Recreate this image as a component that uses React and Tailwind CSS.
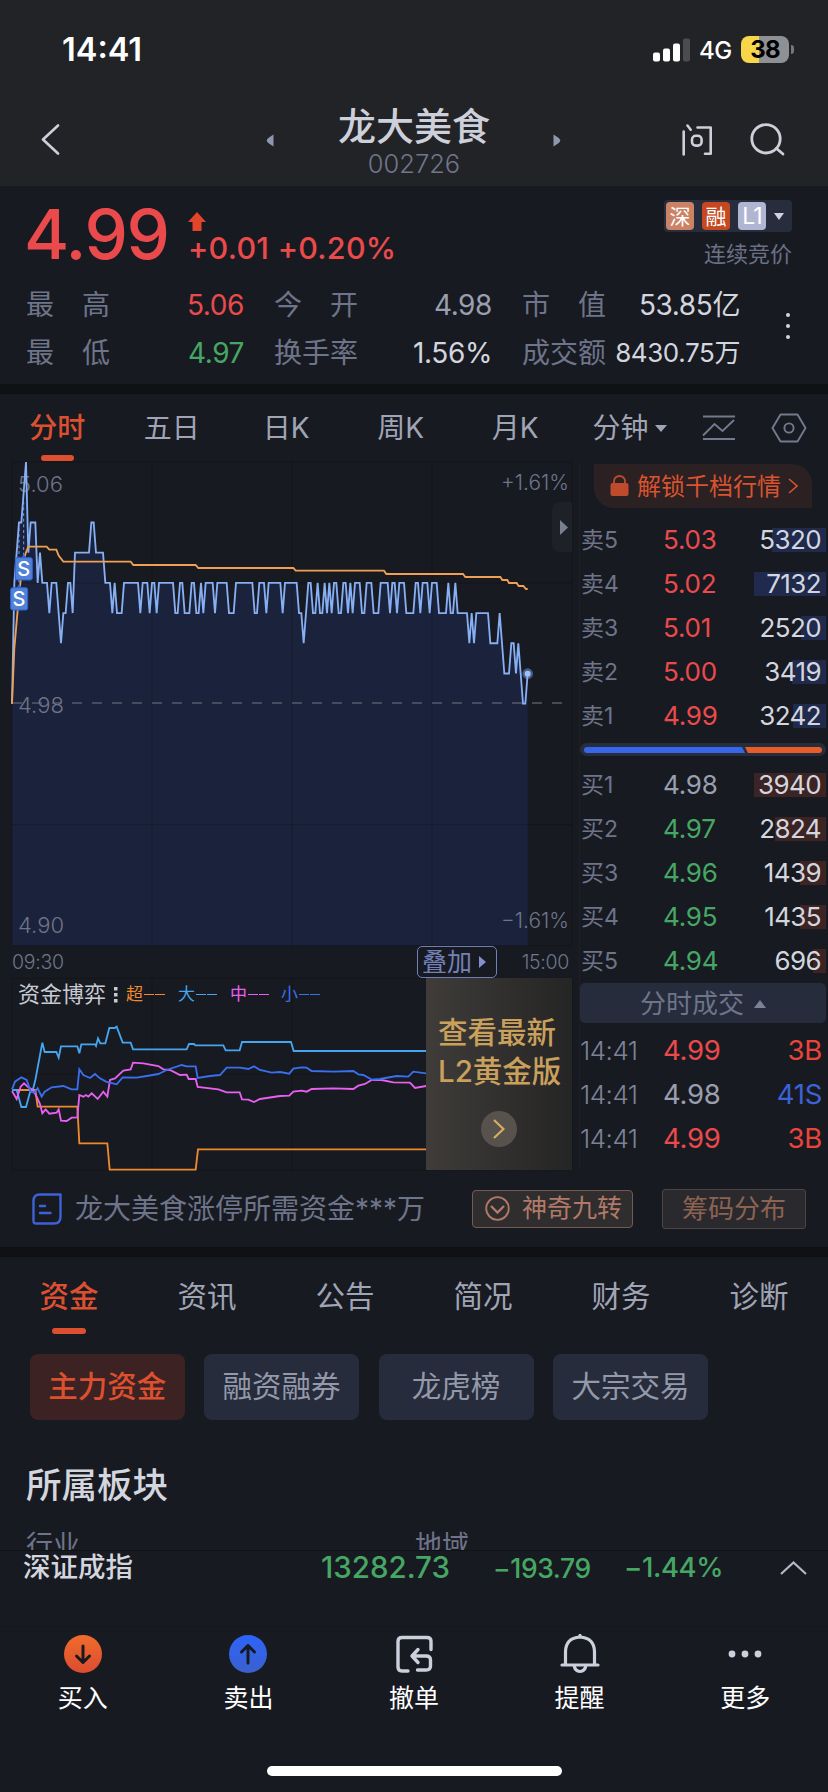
import { useId } from 'react';

// [cents above previous close, minutes it lasted]
const priceRuns = [
  [0, 1], [4, 1], [5, 1], [6, 2], [7, 1], [8, 1], [5, 1], [6, 3], [4, 1], [5, 1], [4, 3], [3, 1], [4, 3], [3, 1], [2, 1],
  [3, 2], [4, 2], [3, 1], [5, 7], [6, 2], [5, 4], [4, 3], [3, 1], [4, 1], [3, 3], [4, 7], [3, 1], [4, 3], [3, 1], [4, 2],
  [3, 1], [4, 7], [3, 2], [4, 2], [3, 3], [4, 2], [3, 2], [4, 1], [3, 1], [4, 4], [3, 1], [4, 5], [3, 3], [4, 8], [3, 2],
  [4, 3], [3, 1], [4, 6], [3, 1], [4, 6], [3, 2], [2, 1], [3, 1], [4, 2], [3, 2], [4, 1], [3, 2], [4, 1], [3, 1],
  [4, 1], [3, 1], [4, 2], [3, 2], [4, 2], [3, 1], [4, 1], [3, 1], [4, 3], [3, 2], [4, 3], [3, 3], [4, 4], [3, 1], [4, 2],
  [3, 1], [4, 3], [3, 4], [4, 2], [3, 1], [4, 3], [3, 1], [4, 3], [3, 4], [4, 1], [3, 2], [4, 1], [3, 5], [2, 1], [3, 1],
  [2, 1], [3, 6], [2, 4], [3, 1], [2, 1], [1, 3], [2, 2], [1, 1], [2, 1], [1, 1], [0, 2], [1, 1],
];

const prices = priceRuns.flatMap(([value, count]) => Array(count).fill(value));
const pricePoints = prices.map((p, i) => `${36 + i * 7},${926 - p * 90.6}`).join(' ');
const lastX = 36 + (prices.length - 1) * 7;

const averagePoints =
  '36,926 43,760 50,680 57,600 64,540 71,495 78,472 85,455 140,455 148,464 169,464 176,482 190,500 392,500 400,510 587,510 595,519 880,519 887,527 1152,527 1159,537 1389,537 1396,546 1501,546 1507,555 1522,555 1527,564 1550,564 1556,573 1570,573 1578,582 1583,582';

const fundLines = [
  {
    color: '#ee8a2e',
    points: '36,570 106,570 113,620 232,620 238,730 322,730 329,809 587,809 594,748 1278,748',
  },
  {
    color: '#45a5ee',
    points:
      '36,570 50,570 64,621 78,621 92,570 99,568 106,540 127,428 134,456 169,456 176,473 183,439 232,439 238,460 244,433 285,433 288,438 294,415 301,430 316,430 328,384 344,384 350,380 368,428 392,428 399,448 560,448 567,432 582,432 586,436 670,436 677,451 719,451 726,426 873,426 881,453 1278,453',
  },
  {
    color: '#e860f0',
    points:
      '36,573 50,597 62,560 72,550 85,562 99,570 110,590 120,612 127,640 137,628 148,641 170,638 176,628 183,662 200,663 215,653 232,652 238,585 250,590 258,585 265,590 275,580 293,597 310,575 322,590 330,540 345,535 370,512 392,508 399,488 430,490 475,498 490,508 510,510 540,525 560,524 566,537 587,537 593,561 655,568 680,577 719,577 726,598 745,599 762,606 780,597 840,588 868,587 880,575 905,572 920,575 935,567 1000,565 1060,567 1075,557 1095,552 1115,540 1145,540 1180,547 1230,548 1245,564 1278,558',
  },
  {
    color: '#3a6ff0',
    points:
      '36,568 45,545 64,532 80,540 92,575 103,578 113,565 125,590 134,575 155,562 190,558 215,568 232,568 238,508 250,525 270,534 285,522 300,535 318,545 350,553 368,532 410,533 440,528 475,522 500,510 545,495 560,499 587,499 593,534 630,528 660,525 680,503 720,503 745,507 762,499 780,510 815,518 840,516 868,521 880,506 905,502 920,503 935,513 1000,515 1060,513 1075,523 1090,525 1115,539 1140,537 1190,528 1225,530 1240,515 1278,520',
  },
];

const sells = [
  { label: '卖5', price: '5.03', volume: '5320', bar: 54 },
  { label: '卖4', price: '5.02', volume: '7132', bar: 72 },
  { label: '卖3', price: '5.01', volume: '2520', bar: 25 },
  { label: '卖2', price: '5.00', volume: '3419', bar: 34 },
  { label: '卖1', price: '4.99', volume: '3242', bar: 33 },
];

const buys = [
  { label: '买1', price: '4.98', volume: '3940', bar: 72, color: 'text-[#9a9fb0]' },
  { label: '买2', price: '4.97', volume: '2824', bar: 51, color: 'text-[#46a765]' },
  { label: '买3', price: '4.96', volume: '1439', bar: 26, color: 'text-[#46a765]' },
  { label: '买4', price: '4.95', volume: '1435', bar: 26, color: 'text-[#46a765]' },
  { label: '买5', price: '4.94', volume: '696', bar: 13, color: 'text-[#46a765]' },
];

const trades = [
  { price: '4.99', amount: '3B', color: 'text-[#eb4a4c]', amountColor: 'text-[#ea4538]' },
  { price: '4.98', amount: '41S', color: 'text-[#9a9fb0]', amountColor: 'text-[#3c62d8]' },
  { price: '4.99', amount: '3B', color: 'text-[#eb4a4c]', amountColor: 'text-[#ea4538]' },
];

const StatusBar = () => (
  <div className="flex h-[98px] items-center justify-between pt-[1px] pl-[62px] pr-[34px] text-white">
    <span className="mt-[2px] text-[32.5px] font-semibold leading-none">14:41</span>
    <div className="flex items-center">
      <svg width="38" height="24" viewBox="0 0 38 24" fill="#fff">
        <rect x="0" y="14.5" width="7" height="9" rx="2" />
        <rect x="10" y="10.5" width="7" height="13" rx="2" />
        <rect x="20" y="5.5" width="7" height="18" rx="2" />
        <rect x="30" y="0.5" width="7" height="23" rx="2" fill="#4b4c50" />
      </svg>
      <span className="ml-2 mt-[2px] w-[33px] text-[24px] font-medium leading-none tracking-[-0.5px]">4G</span>
      <div className="ml-[9px] flex h-[27px] w-[48px] items-center justify-center rounded-[8px] bg-[linear-gradient(to_right,#f8d64a_38%,#8f9094_38%)] text-[24px] font-bold leading-none tracking-[-0.8px] text-black">
        38
      </div>
      <div className="ml-[2px] h-[9px] w-[3px] rounded-r-full bg-[#77787c]" />
    </div>
  </div>
);

const Header = () => (
  <div className="flex h-[88px] items-center pl-[41px] pr-[41px] text-[#cdd0da]">
    <svg width="19" height="31" viewBox="0 0 19 31" fill="none" stroke="currentColor" strokeWidth="2.6" strokeLinecap="round" strokeLinejoin="round" className="mt-[-5px]">
      <path d="M17 1.5 L2 15.5 L17 29.5" />
    </svg>
    <svg width="8" height="13" viewBox="0 0 8 13" className="ml-[206px] mt-[-4px]">
      <path d="M7.5 0.5 V12.5 L3 9.5 Q-1.5 6.5 3 3.5 Z" fill="#8f97ae" />
    </svg>
    <div className="ml-[64px] mt-[-3px] flex w-[152px] flex-col items-center">
      <div className="whitespace-nowrap text-[38px] font-medium leading-[44px]">龙大美食</div>
      <div className="mt-[3px] text-[25.5px] font-light leading-[26px] text-[#70768c]">002726</div>
    </div>
    <svg width="8" height="13" viewBox="0 0 8 13" className="ml-[63px] mt-[-4px]">
      <path d="M0.5 0.5 V12.5 L5 9.5 Q9.5 6.5 5 3.5 Z" fill="#8f97ae" />
    </svg>
    <svg width="32" height="33" viewBox="0 0 32 33" fill="none" stroke="currentColor" strokeWidth="2.6" strokeLinecap="round" strokeLinejoin="round" className="ml-[121px] mt-[-4px]">
      <path d="M1.7 7.5 V30.5 M5.5 1.5 L8.7 5.7 M15.5 3.5 H28.7 V29.7 H23" />
      <rect x="10" y="11.8" width="9.6" height="9.8" rx="3.8" />
    </svg>
    <svg width="37" height="34" viewBox="0 0 37 34" fill="none" stroke="currentColor" strokeWidth="2.8" strokeLinecap="round" className="ml-[36px] mt-[-4px]">
      <circle cx="16" cy="15.8" r="14.2" />
      <path d="M26.5 25.5 L33 31" />
    </svg>
  </div>
);

const Stat = ({ label, value, color, size = 'text-[28px]' }) => (
  <div className="flex w-[218px] items-center justify-between whitespace-nowrap">
    <span className="flex w-[84px] justify-between text-[28px] text-[#6e7489]">
      {label.split('').map((c) => (
        <span key={c}>{c}</span>
      ))}
    </span>
    <span className={`tracking-[-0.4px] ${size} ${color}`}>{value}</span>
  </div>
);

const Quote = () => (
  <div className="h-[198px] pt-[14px]">
    <div className="flex h-[85px] pl-[24px] pr-[36px]">
      <div className="w-[164px] text-[69px] font-medium leading-[68px] tracking-[-1.4px] text-[#eb4a4c]">4.99</div>
      <div className="pt-[12px]">
        <svg width="18" height="20" viewBox="0 0 18 20">
          <path d="M9 0 L18 10 H13.5 V19 H4.5 V10 H0 Z" fill="#e2452a" />
        </svg>
        <div className="whitespace-nowrap text-[30.5px] font-medium leading-[32px] tracking-[0.25px] text-[#eb4a4c]">+0.01 +0.20%</div>
      </div>
      <div className="ml-auto flex flex-col items-end">
        <div className="flex h-8 items-center gap-2 rounded-[4px] bg-[#272d3d] px-[2px] text-[21px] leading-none text-white">
          <span className="flex size-7 items-center justify-center rounded-[4px] bg-[#cc8264]">深</span>
          <span className="flex size-7 items-center justify-center rounded-[4px] bg-[#c54820]">融</span>
          <span className="flex size-7 items-center justify-center rounded-[4px] bg-[#b0b6d2] text-[23px] tracking-[-1px]">L1</span>
          <svg width="10" height="7" viewBox="0 0 10 7" className="mr-[6px]">
            <path d="M0 0 H10 L5 7 Z" fill="#d0d3dc" />
          </svg>
        </div>
        <div className="mt-[10px] text-[22px] leading-6 text-[#6b7185]">连续竞价</div>
      </div>
    </div>
    <div className="flex">
      <div className="flex flex-col gap-[8px] pl-[26px]">
        <div className="flex h-10 items-center gap-[30px]">
          <Stat label="最高" value="5.06" color="text-[#eb4a4c]" />
          <Stat label="今开" value="4.98" color="text-[#9a9fb0]" />
          <Stat label="市值" value="53.85亿" color="text-[#d3d6de]" />
        </div>
        <div className="flex h-10 items-center gap-[30px]">
          <Stat label="最低" value="4.97" color="text-[#46a765]" />
          <Stat label="换手率" value="1.56%" color="text-[#d3d6de]" />
          <Stat label="成交额" value="8430.75万" color="text-[#d3d6de]" size="text-[26px]" />
        </div>
      </div>
      <div className="ml-[46px] mt-[28px] flex flex-col gap-[7px]">
        <i className="size-1 rounded-full bg-[#d3d6de]" />
        <i className="size-1 rounded-full bg-[#d3d6de]" />
        <i className="size-1 rounded-full bg-[#d3d6de]" />
      </div>
    </div>
  </div>
);

const PeriodTabs = () => (
  <div className="flex h-[68px] items-center text-[28px] text-[#a0a5b5]">
    <div className="relative w-[114.5px] text-center font-medium text-[#dc5030]">
      分时
      <div className="absolute left-[41px] top-[41px] z-10 h-[6px] w-[33px] rounded-full bg-[#dc5030]" />
    </div>
    {['五日', '日K', '周K', '月K'].map((t) => (
      <div key={t} className="w-[114.5px] text-center">{t}</div>
    ))}
    <div className="ml-[20px] flex items-center gap-[6px]">
      分钟
      <svg width="12" height="7" viewBox="0 0 12 7">
        <path d="M0 0 H12 L6 7 Z" fill="#a0a5b5" />
      </svg>
    </div>
    <svg width="34" height="26" viewBox="0 0 34 26" fill="none" stroke="#747a8e" strokeWidth="1.9" className="ml-[35px]">
      <path d="M1 1.5 H33 M1 24 H33 M1 20.5 L12.5 9 L20.5 16 L32 5" />
    </svg>
    <svg width="36" height="30" viewBox="0 0 36 30" fill="none" stroke="#747a8e" strokeWidth="1.9" strokeLinejoin="round" className="ml-[35px]">
      <path d="M9.5 1.5 H26.5 L34.5 15 L26.5 28.5 H9.5 L1.5 15 Z" />
      <circle cx="18" cy="15" r="4.6" />
    </svg>
  </div>
);

const SellMark = ({ x, y }) => (
  <g>
    <path d={`M${x - 8} ${y} L${x} ${y - 10} L${x + 8} ${y} Z`} fill="#2f62d6" />
    <rect x={x - 25} y={y} width="51" height="67" rx="6" fill="#4f82d8" stroke="#2f62d6" strokeWidth="3" />
    <text x={x} y={y + 55} textAnchor="middle" fontSize="60" fontWeight="500" fill="#fff">S</text>
  </g>
);

const PriceChart = () => (
  <div className="relative h-[484px] w-[560px] text-[#6e7489]">
    <svg width="560" height="484" viewBox="36 201 1680 1452" className="block overflow-visible">
      <polygon points={`36,1652 ${pricePoints} ${lastX},1652`} fill="#1a233b" />
      <path d="M36 201 H1716 V1652 H36 Z M456 201 V1652 M876 201 V1652 M1296 201 V1652 M36 564 H1716 M36 1289 H1716" fill="none" stroke="#000" strokeOpacity="0.2" strokeWidth="3" />
      <path d="M36 924 H1700" stroke="#575a6a" strokeWidth="5" strokeDasharray="30 30" />
      <path d="M71 320 V480 M57 400 V570" stroke="#6f9ce8" strokeWidth="3" strokeDasharray="9 8" />
    </svg>
    <span className="absolute left-[6px] top-[9px] text-[22px] font-light leading-[26px]">5.06</span>
    <span className="absolute left-[6px] top-[230px] text-[22px] font-light leading-[26px]">4.98</span>
    <span className="absolute left-[6px] top-[450px] text-[22px] font-light leading-[26px]">4.90</span>
    <span className="absolute right-[3px] top-[8px] text-[21px] font-light leading-[26px]">+1.61%</span>
    <span className="absolute right-[3px] top-[446px] text-[21px] font-light leading-[26px]">−1.61%</span>
    <div className="absolute right-0 top-[40px] flex h-[50px] w-[20px] items-center justify-center rounded-l-[8px] bg-[#1e2128]">
      <svg width="8" height="15" viewBox="0 0 8 15" className="ml-[3px]">
        <path d="M0 0 V15 L8 7.5 Z" fill="#7a8094" />
      </svg>
    </div>
    <svg width="560" height="484" viewBox="36 201 1680 1452" className="absolute left-0 top-0 overflow-visible">
      <polyline points={pricePoints} fill="none" stroke="#86aff4" strokeWidth="5.5" />
      <polyline points={averagePoints} fill="none" stroke="#efa052" strokeWidth="5.5" />
      <SellMark x={71} y={488} />
      <SellMark x={57} y={578} />
      <circle cx={lastX} cy="836" r="16" fill="#86aff4" fillOpacity="0.45" />
      <circle cx={lastX} cy="836" r="9" fill="#9cc0fa" />
    </svg>
  </div>
);

const TimeAxis = () => (
  <div className="flex h-8 w-[560px] items-center text-[19.5px] font-light text-[#6e7489]">
    <span className="mt-[2px] tracking-[-0.3px]">09:30</span>
    <div className="ml-auto flex h-8 w-[80px] items-center gap-[7px] rounded-[5px] border border-[#7480b8] pl-[4px] text-[25px] font-normal text-[#7480b8]">
      叠加
      <svg width="7" height="12" viewBox="0 0 7 12">
        <path d="M0 0 V12 L7 6 Z" fill="#8490cc" />
      </svg>
    </div>
    <span className="ml-[27px] mr-[3px] mt-[2px] flex w-[45px] justify-end tracking-[-0.3px]">15:00</span>
  </div>
);

const Dashes = () => (
  <span className="flex gap-[1.5px]">
    <i className="h-[1.5px] w-[9.5px] bg-current" />
    <i className="h-[1.5px] w-[9.5px] bg-current" />
  </span>
);

const FundChart = () => (
  <div className="relative h-[192px] w-[560px]">
    <svg width="560" height="192" viewBox="36 234 1680 576" className="block overflow-visible">
      <path d="M36 235 H1716 V810 H36 Z M456 235 V810 M876 235 V810 M36 522 H1716" fill="none" stroke="#000" strokeOpacity="0.2" strokeWidth="3" />
      {fundLines.map((l) => (
        <polyline key={l.color} points={l.points} fill="none" stroke={l.color} strokeWidth="5.5" />
      ))}
    </svg>
    <div className="absolute left-[6px] top-[3px] flex items-center whitespace-nowrap text-[17px] leading-[27px]">
      <span className="text-[22px] text-[#c8cad2]">资金博弈</span>
      <svg width="4" height="16" viewBox="0 0 4 16" fill="#c8cad2" className="ml-[8px] mr-[8px]">
        <rect width="3.5" height="3.5" />
        <rect y="6" width="3.5" height="3.5" />
        <rect y="12" width="3.5" height="3.5" />
      </svg>
      <span className="flex w-[52px] items-center gap-[1px] text-[#ee8a2e]">超<Dashes /></span>
      <span className="flex w-[52px] items-center gap-[1px] text-[#45a5ee]">大<Dashes /></span>
      <span className="flex w-[51px] items-center gap-[1px] text-[#e860f0]">中<Dashes /></span>
      <span className="flex w-[52px] items-center gap-[1px] text-[#3a6ff0]">小<Dashes /></span>
    </div>
    <div className="absolute right-0 top-0 flex h-[192px] w-[146px] flex-col items-center bg-linear-to-r from-[#3f3c39] to-[#252525] pt-[34.5px] text-[29.5px] leading-[39px] text-[#c9a05c]">
      <div className="w-[122px] whitespace-nowrap font-medium">查看最新</div>
      <div className="w-[122px] whitespace-nowrap font-medium">L2黄金版</div>
      <div className="mt-[20.5px] flex size-9 items-center justify-center rounded-full bg-[#57534c]">
        <svg width="12" height="20" viewBox="0 0 12 20" fill="none" stroke="#d9ad62" strokeWidth="2.2">
          <path d="M1 1 L10.5 10 L1 19" />
        </svg>
      </div>
    </div>
  </div>
);

const OrderRow = ({ row, priceColor, barColor }) => (
  <div className="flex h-11 items-center pl-[1px]">
    <span className="w-[82px] text-[23px] text-[#6e7489]">{row.label}</span>
    <span className={`w-[80px] text-[26px] tracking-[-0.2px] ${priceColor}`}>{row.price}</span>
    <div className="relative flex h-6 flex-1 items-center justify-end pr-[5px]">
      <div className={`absolute right-0 top-0 h-6 ${barColor}`} style={{ width: row.bar }} />
      <span className="relative text-[26px] tracking-[-0.6px] text-[#d3d6de]">{row.volume}</span>
    </div>
  </div>
);

const OrderBook = () => (
  <div className="w-[246px]">
    <div className="ml-[14px] flex h-[44px] w-[218px] items-center rounded-bl-[20px] rounded-tr-[20px] bg-[#2b2022] pl-[16px] text-[24px] text-[#d9532f]">
      <svg width="19" height="22" viewBox="0 0 19 22">
        <rect x="0.5" y="8" width="18" height="13" rx="2" fill="#c04a2c" />
        <path d="M4 9 V6 A5.5 5 0 0 1 15 6 V9" fill="none" stroke="#c04a2c" strokeWidth="1.8" />
      </svg>
      <span className="ml-[8px] mt-[2px] whitespace-nowrap">解锁千档行情</span>
      <svg width="10" height="16" viewBox="0 0 10 16" fill="none" stroke="currentColor" strokeWidth="1.6" className="ml-[7px]">
        <path d="M1 1 L9 8 L1 15" />
      </svg>
    </div>
    <div className="mt-[10px]">
      {sells.map((r) => (
        <OrderRow key={r.label} row={r} priceColor="text-[#eb4a4c]" barColor="bg-[#202a4c]" />
      ))}
    </div>
    <div className="mt-[5px] flex h-[13px] items-center rounded-full bg-[#262d3c] px-[4px]">
      <svg width="238" height="6" viewBox="0 0 238 6">
        <path d="M3 0 H158 L161 6 H3 A3 3 0 0 1 3 0 Z" fill="#3866e8" />
        <path d="M161 0 H235 A3 3 0 0 1 235 6 H164 Z" fill="#e65c2b" />
      </svg>
    </div>
    <div className="mt-[7px]">
      {buys.map((r) => (
        <OrderRow key={r.label} row={r} priceColor={r.color} barColor="bg-[#3d2424]" />
      ))}
    </div>
    <div className="flex h-10 items-center justify-center gap-[10px] rounded-[5px] bg-[#262c3c] pt-[2px] text-[26px] text-[#6e7489]">
      分时成交
      <svg width="12" height="8" viewBox="0 0 12 8">
        <path d="M0 8 H12 L6 0 Z" fill="#7d8396" />
      </svg>
    </div>
    <div className="mt-[6px]">
      {trades.map((t, i) => (
        <div key={i} className="flex h-11 items-center pr-[4px] text-[27.5px] tracking-[-0.3px]">
          <span className="w-[83px] text-[26px] font-light tracking-[-0.5px] text-[#7d8396]">14:41</span>
          <span className={t.color}>{t.price}</span>
          <span className={`ml-auto ${t.amountColor}`}>{t.amount}</span>
        </div>
      ))}
    </div>
  </div>
);

const InfoRow = () => (
  <div className="flex h-[77px] items-center pl-[32px]">
    <svg width="30" height="32" viewBox="0 0 30 32" fill="none" stroke="#3c62d8" strokeWidth="2.4" strokeLinecap="round">
      <path d="M8 1.5 H28.5 V24 Q28.5 30.5 22 30.5 H4 Q1.5 30.5 1.5 28 V8 Q1.5 1.5 8 1.5 Z" strokeLinejoin="round" />
      <path d="M8 13 H13 M8 20 H18.5" />
    </svg>
    <span className="ml-[13px] w-[397px] whitespace-nowrap text-[28px] text-[#6e7489]">龙大美食涨停所需资金***万</span>
    <div className="flex h-[38px] w-[161px] items-center justify-center gap-[12px] rounded-[4px] border-[1.5px] border-[#735a52] bg-[#302d2f] pl-[2px] text-[25px] text-[#b07a68]">
      <svg width="25" height="25" viewBox="0 0 25 25" fill="none" stroke="currentColor" strokeWidth="1.8">
        <circle cx="12.5" cy="12.5" r="11.3" />
        <path d="M6 10 L12.5 16.5 L19 10" strokeWidth="2.4" />
      </svg>
      神奇九转
    </div>
    <div className="ml-[29px] flex h-[40px] w-[144px] items-center justify-center rounded-[3px] border border-[#4c4543] bg-[#2a2a2e] text-[26px] text-[#8c6252]">筹码分布</div>
  </div>
);

const BottomNav = () => {
  const id = useId();
  const items = [
    {
      label: '买入',
      icon: (
        <>
          <circle cx="20" cy="20" r="19" fill={`url(#${id}buy)`} />
          <path d="M20 12 V28 M13.5 22 L20 28.5 L26.5 22" stroke="#181a21" strokeWidth="3" />
        </>
      ),
    },
    {
      label: '卖出',
      icon: (
        <>
          <circle cx="20" cy="20" r="19" fill={`url(#${id}sell)`} />
          <path d="M20 29 V12 M13.5 18 L20 11.5 L26.5 18" stroke="#181a21" strokeWidth="3" />
        </>
      ),
    },
    {
      label: '撤单',
      icon: (
        <path d="M37 15.5 V7 Q37 3.5 33 3.5 H8 Q4 3.5 4 7.5 V33 Q4 37 8 37 H14 M24 15.5 L18 22 L24 28.5 M18 22 H32 Q36.5 22 36.5 26 V32 Q36.5 36 32 36 H23.5" stroke="#ccd0dc" strokeWidth="3.4" />
      ),
    },
    {
      label: '提醒',
      icon: (
        <path d="M5.5 31 V18 Q5.5 4 20 3 Q34.5 4 34.5 18 V31 M2 31 H38 M14 31 Q15 37.5 20 37.5 Q25 37.5 26 31 M20 1.5 V3" stroke="#ccd0dc" strokeWidth="3.2" />
      ),
    },
    {
      label: '更多',
      icon: (
        <g fill="#ccd0dc">
          <circle cx="7" cy="20" r="3.4" />
          <circle cx="20" cy="20" r="3.4" />
          <circle cx="33" cy="20" r="3.4" />
        </g>
      ),
    },
  ];

  return (
    <div className="flex h-[140px] border-t border-[#15171b] pt-[7px]">
      <svg width="0" height="0" className="absolute">
        <linearGradient id={`${id}buy`} x2="0" y2="1">
          <stop stopColor="#f06c2c" />
          <stop offset="1" stopColor="#dc4c30" />
        </linearGradient>
        <linearGradient id={`${id}sell`} x2="0" y2="1">
          <stop stopColor="#2c64fa" />
          <stop offset="1" stopColor="#3c60cc" />
        </linearGradient>
      </svg>
      {items.map((item) => (
        <div key={item.label} className="flex flex-1 flex-col items-center">
          <svg width="40" height="40" viewBox="0 0 40 40" fill="none" strokeLinecap="round" strokeLinejoin="round">
            {item.icon}
          </svg>
          <span className="mt-[8px] text-[25px] leading-[32px] text-white">{item.label}</span>
        </div>
      ))}
    </div>
  );
};

const App = () => {
  return (
    <div className="h-[1792px] w-[828px] overflow-hidden bg-[#181a21] font-['Inter','Noto_Sans_CJK_SC',sans-serif] leading-none">
      <div className="h-[186px] bg-[#222326]">
        <StatusBar />
        <Header />
      </div>
      <Quote />
      <div className="h-[10px] bg-[#101115]" />
      <PeriodTabs />
      <div className="flex h-[708px]">
        <div className="w-[580px] border-r border-[#1f1e21] pl-[12px]">
          <PriceChart />
          <TimeAxis />
          <FundChart />
        </div>
        <div className="pt-[2px]">
          <OrderBook />
        </div>
      </div>
      <InfoRow />
      <div className="h-[10px] bg-[#101115]" />
      <div className="flex h-[97px] pt-[22px] text-[29.5px] leading-[34px] text-[#a0a5b5]">
        {['资金', '资讯', '公告', '简况', '财务', '诊断'].map((t, i) => (
          <div key={t} className="flex w-[138px] flex-col items-center">
            <span className={i === 0 ? 'font-medium text-[#dc5030]' : ''}>{t}</span>
            {i === 0 && <div className="mt-[15px] h-[6px] w-[34px] rounded-full bg-[#dc5030]" />}
          </div>
        ))}
      </div>
      <div className="flex gap-[19.5px] pl-[30px] text-[29.5px] text-[#9499aa]">
        <div className="flex h-[66px] w-[154.5px] items-center justify-center rounded-[8px] bg-[#3c2222] font-medium text-[#dc5030]">主力资金</div>
        {['融资融券', '龙虎榜', '大宗交易'].map((t) => (
          <div key={t} className="flex h-[66px] w-[155px] items-center justify-center rounded-[8px] bg-[#262c3c]">{t}</div>
        ))}
      </div>
      <div className="h-[130px] overflow-hidden pl-[26px] pt-[45px]">
        <h2 className="text-[35.5px] font-medium leading-[42px] text-[#d3d6de]">所属板块</h2>
        <div className="mt-[23px] flex text-[27px] leading-[32px] text-[#6e7489]">
          <span className="w-[389px]">行业</span>
          <span>地域</span>
        </div>
      </div>
      <div className="h-[76px] border-t border-[#101216]">
        <div className="flex h-[34px] items-center whitespace-nowrap pl-[23px] text-[#46a765]">
          <span className="w-[298px] text-[27.5px] font-medium text-[#d3d6de]">深证成指</span>
          <span className="w-[172px] text-[29.5px] font-medium">13282.73</span>
          <span className="w-[131px] text-[26.5px] font-medium tracking-[-0.4px]">−193.79</span>
          <span className="w-[156px] text-[27.5px] font-medium tracking-[-0.4px]">−1.44%</span>
          <svg width="27" height="14" viewBox="0 0 27 14" fill="none" stroke="#b4b8c4" strokeWidth="2.2">
            <path d="M1 13 L13.5 1.5 L26 13" />
          </svg>
        </div>
      </div>
      <BottomNav />
      <div className="mx-auto h-[10px] w-[295px] rounded-full bg-white" />
    </div>
  );
};

export default App;
